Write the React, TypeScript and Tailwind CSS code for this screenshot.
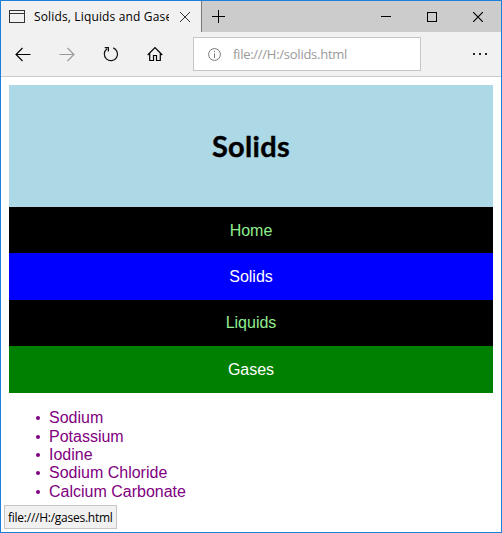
const elements = ["Sodium", "Potassium", "Iodine", "Sodium Chloride", "Calcium Carbonate"];

const links = [
  { label: "Home", style: "h-[46px] pt-px bg-black text-[#90ee90]" },
  { label: "Solids", style: "h-[47px] bg-[#0000ff] text-white" },
  { label: "Liquids", style: "h-[46px] bg-black text-[#90ee90]" },
  { label: "Gases", style: "h-[47px] bg-[#008000] text-white" },
];

function TabBar() {
  return (
    <div className="flex h-[31px] bg-[#cccccc]">
      <div className="flex h-full w-[201px] shrink-0 items-center border-r border-[#777777] bg-[#f1f1f1] pl-2">
        <svg width="16" height="13" viewBox="0 0 16 13" fill="none" stroke="#333" shapeRendering="crispEdges" className="shrink-0">
          <path d="M.5 .5h15v12H.5zM.5 3.5h15" />
        </svg>
        <div className="ml-[9px] w-[135px] shrink-0 overflow-hidden whitespace-nowrap font-['Open_Sans',sans-serif] text-[12px] leading-[18px] tracking-[0.15px] text-black">
          Solids, Liquids and Gases
        </div>
        <svg width="10" height="10" viewBox="0 0 10 10" stroke="#333" className="ml-[11px] shrink-0">
          <path d="M0 0L10 10M10 0L0 10" />
        </svg>
      </div>
      <div className="flex flex-1 items-center justify-between pl-[10px] pr-[18px]">
        <svg width="13" height="13" viewBox="0 0 13 13" stroke="#000" shapeRendering="crispEdges">
          <path d="M0 6.5H13M6.5 0V13" />
        </svg>
        <div className="flex items-center gap-9">
          <svg width="10" height="10" stroke="#000" shapeRendering="crispEdges"><path d="M0 4.5H10" /></svg>
          <svg width="10" height="10" stroke="#000" fill="none" shapeRendering="crispEdges"><path d="M.5 .5h9v9h-9z" /></svg>
          <svg width="10" height="10" stroke="#000" strokeWidth="1.2"><path d="M0 0L10 10M10 0L0 10" /></svg>
        </div>
      </div>
    </div>
  );
}

function Toolbar() {
  return (
    <div className="flex h-[45px] items-center border-b border-[#cccccc] bg-[#f1f1f1] pl-[14px] pr-[13px]">
      <svg width="16" height="16" viewBox="0 0 16 16" fill="none" stroke="#000" strokeWidth="1.1">
        <path d="M15.5 8.5H1M7.5 2L1 8.5L7.5 15" />
      </svg>
      <svg width="16" height="16" viewBox="0 0 16 16" fill="none" stroke="#999" strokeWidth="1.1" className="ml-7">
        <path d="M.5 8.5H15M8.5 2L15 8.5L8.5 15" />
      </svg>
      <svg width="16" height="16" viewBox="0 0 16 16" fill="none" stroke="#111" strokeWidth="1.2" className="ml-7">
        <path d="M10.2 1.9A6.6 6.6 0 1 1 4.1 2.7M1.7 1.7H5.4V5.6" />
      </svg>
      <svg width="16" height="16" viewBox="0 0 16 16" fill="none" stroke="#000" strokeWidth="1.2" className="ml-7">
        <path d="M.7 9L8 1.7L15.3 9M2.7 7.4V14.5H6.5V9.5H9.5V14.5H13.3V7.4" />
      </svg>
      <div className="ml-[30px] flex h-[34px] w-[228px] items-center border border-[#c6c6c6] bg-white pl-[14px]">
        <svg width="13" height="13" viewBox="0 0 13 13" fill="none" stroke="#777" className="mt-px">
          <circle cx="6.5" cy="6.5" r="5.9" />
          <path d="M6.5 5.5V10M6.5 3V4.2" />
        </svg>
        <span className="ml-3 whitespace-nowrap font-['Open_Sans',sans-serif] text-[13px] leading-[18px] tracking-[-0.26px] text-[#999]">
          file:///H:/solids.html
        </span>
      </div>
      <svg width="16" height="4" viewBox="0 0 16 4" fill="#222" shapeRendering="crispEdges" className="ml-auto">
        <path d="M1 1h2v2H1zM7 1h2v2H7zM13 1h2v2h-2z" />
      </svg>
    </div>
  );
}

export default function App() {
  return (
    <div className="relative flex h-[533px] w-[502px] flex-col overflow-hidden border border-[#1a80d9] bg-white">
      <TabBar />
      <Toolbar />
      <main className="flex flex-col px-2 pt-2 font-['Liberation_Sans',Arial,sans-serif] text-[16px]">
        <header className="flex h-[122px] items-center justify-center bg-[#add8e6]">
          <h1 className="font-['Lato',sans-serif] pb-px text-[29px] font-bold leading-[39px] tracking-[0.3px] text-black [-webkit-text-stroke:0.4px_black]">Solids</h1>
        </header>
        <nav>
          {links.map((link) => (
            <a key={link.label} className={`flex items-center justify-center leading-[18px] ${link.style}`}>
              {link.label}
            </a>
          ))}
        </nav>
        <ul className="mt-4 flex flex-col text-[#800080]">
          {elements.map((name) => (
            <li key={name} className="flex h-[18.4px] items-center pl-[27px] leading-[18px]">
              <span className="mr-[9px] size-1 rounded-full bg-[#800080]" />
              {name}
            </li>
          ))}
        </ul>
      </main>
      <div className="absolute left-[3px] top-[504px] flex h-6 w-[113px] items-center whitespace-nowrap border border-[#c6c6c6] bg-[#f1f1f1] pl-[3px] pt-px font-['Open_Sans',sans-serif] text-[12px] tracking-[-0.25px] text-black">
        file:///H:/gases.html
      </div>
    </div>
  );
}
